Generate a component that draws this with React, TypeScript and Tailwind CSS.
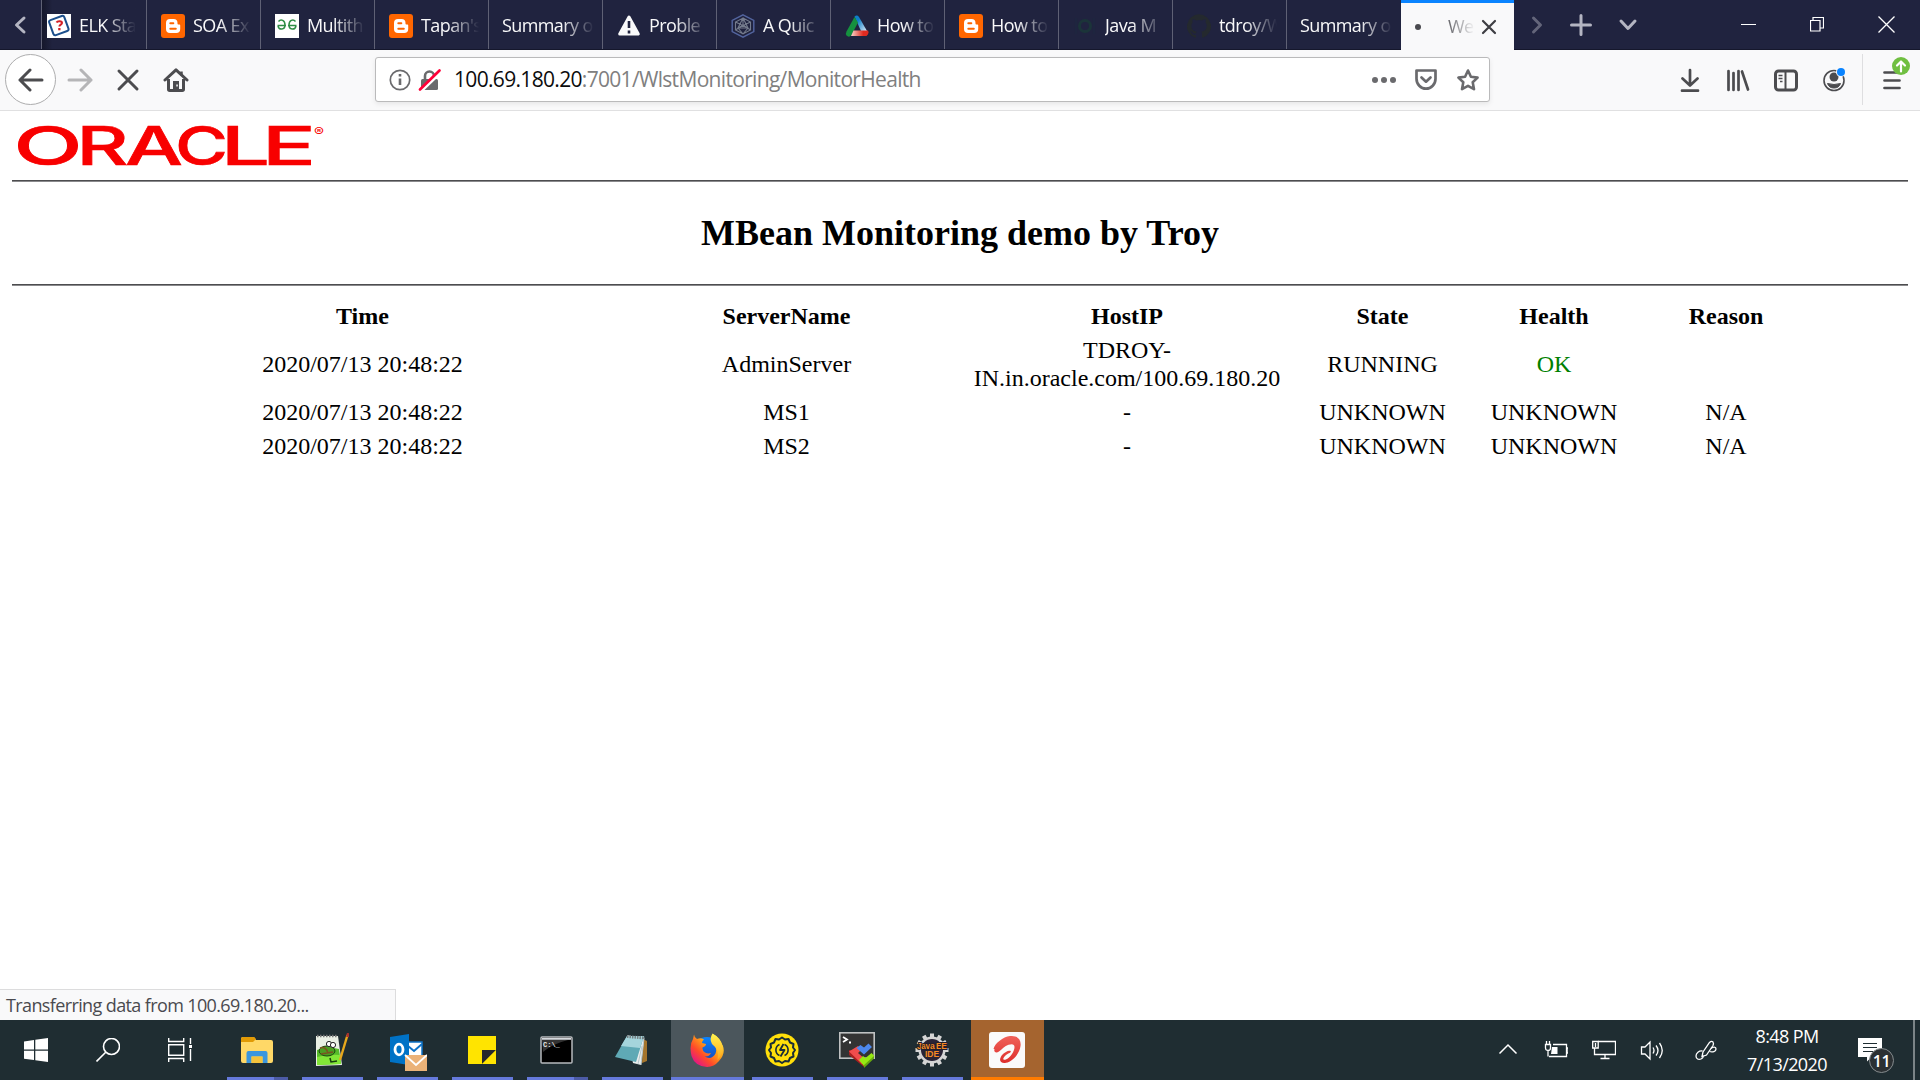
import React from "react";

type IconProps = { children: React.ReactNode; w?: number; h?: number; className?: string };

function Draw({ children, w = 24, h = 24, className = "" }: IconProps) {
  return (
    <svg width={w} height={h} viewBox={`0 0 ${w} ${h}`} fill="none" className={`block shrink-0 ${className}`}>
      {children}
    </svg>
  );
}

/* ---------- favicons ---------- */

const Blogger = () => (
  <Draw>
    <rect width="24" height="24" rx="3" fill="#ff6600" />
    <path d="M9 5h3.5A4 4 0 0 1 16.500 9v.6c0 .6.4 1 1 1h.7c.6 0 1 .4 1 1V15a4 4 0 0 1-4 4H9a4 4 0 0 1-4-4V9a4 4 0 0 1 4-4z" fill="#fff" />
    <path d="M9.300 9.300h3M9.300 14.700h5.500" stroke="#ff6600" strokeWidth="2" strokeLinecap="round" />
  </Draw>
);

const ElkFavicon = () => (
  <Draw>
    <rect width="24" height="24" fill="#fff" />
    <rect x="4" y="3.500" width="16" height="16" rx="2" transform="rotate(-20 12 12)" fill="#fff" stroke="#1c4f8c" strokeWidth="2" />
    <path d="M9.500 8.500c1-1.800 5.500-1.600 5.500.5 0 1.600-2.600 1.600-2.600 3.500" stroke="#d42027" strokeWidth="2" />
    <rect x="11.200" y="14" width="2.300" height="2.300" fill="#d42027" />
  </Draw>
);

const GeeksFavicon = () => (
  <Draw>
    <rect width="24" height="24" fill="#fff" />
    <path d="M2.500 11.500h8.500M3.500 7.500C6 4.500 10 6.500 10 11c0 5-6 5.500-7 1M21.500 11.500H13M20.500 7.500C18 4.500 14 6.500 14 11c0 5 6 5.500 7 1" stroke="#2f8d46" strokeWidth="1.500" />
  </Draw>
);

const WarnFavicon = () => (
  <Draw>
    <path d="M12 3 21.300 20H2.700z" fill="#f9f9fa" stroke="#f9f9fa" strokeWidth="3" strokeLinejoin="round" />
    <path d="M12 7v7M12 16.500v3" stroke="#20233f" strokeWidth="2.600" />
  </Draw>
);

const HexFavicon = () => (
  <Draw>
    <path d="M12 .8 22.800 6.500v11L12 23.200 1.200 17.500v-11z" stroke="#53659f" strokeWidth="1.400" />
    <path d="M12 4 19.500 8v8L12 20l-7.500-4V8zM12 4v7M4.500 8 17 14M19.500 8 7 14M7 14l5 6 5-6M12 4 7 14h10zM4.500 16 12 11l7.500 5" stroke="#747b8c" strokeWidth="1.100" />
  </Draw>
);

const TriFavicon = () => (
  <Draw>
    <defs>
      <linearGradient id="triB" x1="0" y1="0" x2="1" y2="1"><stop offset=".3" stopColor="#0f7ec8" /><stop offset="1" stopColor="#dcecf8" /></linearGradient>
      <linearGradient id="triR" x1="0" x2="1"><stop stopColor="#f8d5cc" /><stop offset=".7" stopColor="#e02a20" /></linearGradient>
    </defs>
    <path d="M9.500 2.500Q12 .500 14 3l8 14h-6z" fill="url(#triB)" />
    <path d="M9.500 3 13 8.500 6.500 21Q4 24 1.500 21.500.200 20 1.500 17.500z" fill="#15913f" />
    <path d="M8.500 16.500H23q1.500 3-1.500 5.500H6z" fill="url(#triR)" />
  </Draw>
);

const JavaFavicon = () => (
  <Draw>
    <path d="M3 4v16M21 4v16" stroke="#1e253f" strokeWidth="3" />
    <circle cx="12" cy="12" r="5.500" stroke="#1b3439" strokeWidth="3" />
  </Draw>
);

const GithubFavicon = () => (
  <Draw>
    <path fill="#24292e" d="M12 .300a12 12 0 0 0-3.800 23.400c.600.100.800-.300.800-.600v-2.200c-3.300.700-4-1.400-4-1.400-.500-1.400-1.300-1.800-1.300-1.800-1.100-.700.100-.700.100-.700 1.200.100 1.800 1.200 1.800 1.200 1.100 1.800 2.800 1.300 3.500 1 .100-.800.400-1.300.800-1.600-2.700-.300-5.500-1.300-5.500-5.900 0-1.300.500-2.400 1.200-3.200 0-.300-.500-1.500.200-3.200 0 0 1-.300 3.300 1.200a11.500 11.500 0 0 1 6 0c2.300-1.500 3.300-1.200 3.300-1.200.700 1.700.200 2.900.100 3.200.800.800 1.200 1.900 1.200 3.200 0 4.600-2.800 5.600-5.500 5.900.400.400.800 1.100.800 2.200v3.300c0 .300.200.700.800.600A12 12 0 0 0 12 .300" />
  </Draw>
);

type Tab = { title: string; icon?: React.ReactNode };

const tabs: Tab[] = [
  { title: "SOA Ex", icon: <Blogger /> },
  { title: "Multith", icon: <GeeksFavicon /> },
  { title: "Tapan's", icon: <Blogger /> },
  { title: "Summary o" },
  { title: "Proble", icon: <WarnFavicon /> },
  { title: "A Quic", icon: <HexFavicon /> },
  { title: "How to", icon: <TriFavicon /> },
  { title: "How to", icon: <Blogger /> },
  { title: "Java M", icon: <JavaFavicon /> },
  { title: "tdroy/W", icon: <GithubFavicon /> },
  { title: "Summary o" },
];

const fade = "overflow-hidden whitespace-nowrap [mask-image:linear-gradient(to_left,transparent,black_32px)]";

function TabStrip() {
  return (
    <div className="flex h-[50px] border-b border-[#15172c] bg-[#20233f] text-[18px] tracking-[-0.6px] text-[#f9f9fa]">
      <div className="flex w-[41px] items-center justify-center pr-px">
        <Draw w={14} h={20}><path d="M11 3 3.500 10l7.500 7" stroke="#b4b5c2" strokeWidth="3" strokeLinecap="round" strokeLinejoin="round" /></Draw>
      </div>
      <div className="flex w-[106px] items-center border-x border-[#5f6175] bg-linear-to-r from-[#15172b] to-[#20233f] to-10% pt-[3px] pl-[5px]">
        <ElkFavicon />
        <span className={`${fade} ml-[8px] w-[57px] pb-px`}>ELK Sta</span>
      </div>
      {tabs.map((t, i) => (
        <div key={i} className={`flex w-[114px] shrink-0 items-center pt-[3px] pl-[14px] ${i < 10 ? "border-r border-[#5f6175]" : ""}`}>
          {t.icon}
          <span className={t.icon ? `${fade} ml-2 w-[58px] pb-px` : `${fade} -ml-px w-[92px] pb-px`}>{t.title}</span>
        </div>
      ))}
      <div className="-mb-px flex w-[113px] shrink-0 items-center border-t-[3px] border-[#0a84ff] bg-[#f9f9fa] pl-[14px] text-[#4a4a4f]">
        <span className="mr-[27px] size-[6px] rounded-full bg-[#4a4a4f]" />
        <span className={`${fade} w-[27px]`}>We</span>
        <Draw w={16} h={16} className="ml-[6px]"><path d="m2 2 12 12M14 2 2 14" stroke="#3e3e43" strokeWidth="2.200" strokeLinecap="round" /></Draw>
      </div>
      <div className="flex w-[46px] items-center justify-center">
        <Draw w={12} h={20}><path d="m2.500 3 7 7-7 7" stroke="#63657a" strokeWidth="3" strokeLinecap="round" strokeLinejoin="round" /></Draw>
      </div>
      <div className="flex w-[42px] items-center justify-center">
        <Draw><path d="M12 2.500v19M2.500 12h19" stroke="#b4b5c2" strokeWidth="3" strokeLinecap="round" /></Draw>
      </div>
      <div className="flex w-[52px] items-center justify-center">
        <Draw w={20} h={16}><path d="m3 4 7 7.500L17 4" stroke="#b4b5c2" strokeWidth="3" strokeLinecap="round" strokeLinejoin="round" /></Draw>
      </div>
      <div className="ml-auto flex">
        <div className="flex w-[69px] items-center justify-center pr-[3px]"><Draw w={16}><path d="M1 11.500h15" stroke="#fff" /></Draw></div>
        <div className="flex w-[69px] items-center justify-center pr-[3px]"><Draw w={14} h={15}><path d="M.500 3.500h9.500v10.500H.500zM3 3.500v-3h10.500v10.500H10" stroke="#fff" strokeWidth="1.200" /></Draw></div>
        <div className="flex w-[67px] items-center justify-center"><Draw w={17} h={17}><path d="m.500.500 16 16M16.500.500l-16 16" stroke="#fff" strokeWidth="1.300" /></Draw></div>
      </div>
    </div>
  );
}

function Toolbar() {
  return (
    <div className="flex h-[61px] items-center border-b border-[#e0e0e1] bg-[#f9f9fa] pb-px">
      <div className="ml-[5px] flex size-[51px] items-center justify-center rounded-full border border-[#adadae] bg-white">
        <Draw w={26}><path d="M2 12h22M12 2 2 12l10 10" stroke="#4c4c4f" strokeWidth="3" strokeLinecap="round" strokeLinejoin="round" /></Draw>
      </div>
      <Draw w={26} className="ml-[11px]"><path d="M2 12h22M14 2l10 10-10 10" stroke="#b5b5b7" strokeWidth="3" strokeLinecap="round" strokeLinejoin="round" /></Draw>
      <Draw className="ml-[23px]"><path d="m3 3 18 18M21 3 3 21" stroke="#4c4c4f" strokeWidth="3" strokeLinecap="round" /></Draw>
      <Draw w={26} className="ml-[23px]">
        <path d="M2 12 13 1.800 24 12" stroke="#4c4c4f" strokeWidth="3" strokeLinecap="round" strokeLinejoin="round" />
        <path d="M18.500 3.500v4" stroke="#4c4c4f" strokeWidth="2.500" />
        <path d="M5.500 11v10.300q0 1.200 1.200 1.200h12.600q1.200 0 1.200-1.200V11" stroke="#4c4c4f" strokeWidth="3" />
        <path d="M10 22v-9h6v9" fill="#4c4c4f" />
        <rect x="13.300" y="16.500" width="1.500" height="2" fill="#f9f9fa" />
      </Draw>
      <div className="ml-[186px] flex h-[45px] w-[1115px] items-center rounded-[3px] border border-[#bababb] bg-white px-[13px] shadow-[0_2px_5px_rgba(0,0,0,0.08)]">
        <Draw w={22}>
          <circle cx="11" cy="12" r="9.700" stroke="#6a6a6d" strokeWidth="1.700" />
          <path d="M11 10.500V17M11 6v2.600" stroke="#6a6a6d" strokeWidth="2.600" />
        </Draw>
        <Draw className="ml-[7px]">
          <path d="M7 12V8a4.500 4.500 0 0 1 9 0v4" stroke="#6a6a6d" strokeWidth="2.600" />
          <rect x="3" y="11" width="17" height="11" rx="1.500" fill="#6a6a6d" />
          <path d="M1.500 24 23.500 3" stroke="#fff" strokeWidth="4" />
          <path d="M2 21.500 21.500 2.500" stroke="#ff0039" strokeWidth="2.700" strokeLinecap="round" />
        </Draw>
        <span className="ml-[12px] pt-px text-[21px] tracking-[-0.68px] whitespace-nowrap text-[#808080]"><span className="text-[#0c0c0d]">100.69.180.20</span>:7001/WlstMonitoring/MonitorHealth</span>
        <Draw w={26} className="ml-auto"><circle cx="4" cy="12" r="3" fill="#6a6a6d" /><circle cx="13" cy="12" r="3" fill="#6a6a6d" /><circle cx="22" cy="12" r="3" fill="#6a6a6d" /></Draw>
        <Draw className="ml-[17px]">
          <path d="M2.500 2.500h19v8.200a9.500 10 0 0 1-19 0z" stroke="#6a6a6d" strokeWidth="2.700" strokeLinejoin="round" />
          <path d="m7.500 9.500 4.500 4.200 4.500-4.200" stroke="#6a6a6d" strokeWidth="2.700" strokeLinecap="round" strokeLinejoin="round" />
        </Draw>
        <Draw className="-mr-[4px] ml-[18px]"><path d="m12 2.500 2.900 6.200 6.700.900-4.900 4.700 1.300 6.900-6-3.400-6 3.400 1.300-6.900-4.900-4.700 6.700-.900z" stroke="#6a6a6d" strokeWidth="2.600" strokeLinejoin="round" /></Draw>
      </div>
      <div className="ml-auto flex items-center">
        <Draw><path d="M12 2v15M4.500 10.500 12 17.500l7.500-7M4 22.700h16" stroke="#4c4c4f" strokeWidth="2.700" strokeLinecap="round" strokeLinejoin="round" /></Draw>
        <Draw className="ml-6"><path d="M2.500 3v19M7.500 5v17M12.500 3v19M16 3.500 22 21.500" stroke="#4c4c4f" strokeWidth="2.700" strokeLinecap="round" /></Draw>
        <Draw className="ml-6">
          <rect x="1.500" y="3" width="21" height="19" rx="3" stroke="#4c4c4f" strokeWidth="3" />
          <path d="M11.500 3v19" stroke="#4c4c4f" strokeWidth="2" />
          <path d="M4.500 7.500h4M4.500 10.500h4M6 13.500h2.500" stroke="#4c4c4f" strokeWidth="1.300" />
        </Draw>
        <div className="relative ml-6">
          <Draw>
            <circle cx="12" cy="12.500" r="10" stroke="#4c4c4f" strokeWidth="1.600" />
            <circle cx="12" cy="9" r="4.500" fill="#4c4c4f" />
            <path d="M5.500 15.500q6.500 2 13 0-1.500 4.500-6.500 4.500t-6.500-4.500z" fill="#4c4c4f" stroke="#4c4c4f" strokeLinejoin="round" />
          </Draw>
          <span className="absolute top-0 left-[15px] size-[8px] rounded-full bg-[#0a84ff] ring-1 ring-[#f9f9fa]" />
        </div>
        <div className="ml-4 h-[51px] w-px bg-[#dedee0]" />
        <div className="relative mr-4 ml-[17px]">
          <Draw><path d="M4.500 4.500h15M4.500 12.500h15M4.500 20h15" stroke="#4c4c4f" strokeWidth="2.700" strokeLinecap="round" /></Draw>
          <span className="absolute -top-[11px] left-[12px] flex size-[18px] items-center justify-center rounded-full bg-[#70bf41]">
            <Draw w={14} h={14}><path d="M7 2.500v10M3 6.500l4-4 4 4" stroke="#fff" strokeWidth="2.200" strokeLinecap="round" strokeLinejoin="round" /></Draw>
          </span>
        </div>
      </div>
    </div>
  );
}

/* ---------- page ---------- */

const wordmark = [
  { c: "O", x: 1.500, w: 69 },
  { c: "R", x: 64.500, w: 52 },
  { c: "A", x: 113, w: 58 },
  { c: "C", x: 163, w: 53 },
  { c: "L", x: 209, w: 49 },
  { c: "E", x: 250, w: 54 },
];

function OracleLogo() {
  return (
    <svg width="320" height="56" viewBox="0 0 320 56" className="block" aria-label="Oracle">
      <g fill="#f80000" fontFamily="Inter, 'Liberation Sans', sans-serif">
        <text y="47" fontSize="53" fontWeight="500" stroke="#f80000" strokeWidth=".6">
          {wordmark.map((l) => (
            <tspan key={l.c} x={l.x} textLength={l.w} lengthAdjust="spacingAndGlyphs">{l.c}</tspan>
          ))}
        </text>
        <text x="302" y="18" fontSize="12" textLength="10" lengthAdjust="spacingAndGlyphs">®</text>
      </g>
    </svg>
  );
}

const rows = [
  ["2020/07/13 20:48:22", "AdminServer", "TDROY-\nIN.in.oracle.com/100.69.180.20", "RUNNING", "OK", ""],
  ["2020/07/13 20:48:22", "MS1", "-", "UNKNOWN", "UNKNOWN", "N/A"],
  ["2020/07/13 20:48:22", "MS2", "-", "UNKNOWN", "UNKNOWN", "N/A"],
];

const rowGrid = "grid grid-cols-[525px_323px_358px_153px_190px_154px] items-center pl-[88px] text-center";

function Rule() {
  return <div className="h-[2px] border-t border-[#4d4d4f] bg-[#8a8a8c]" />;
}

function Page() {
  return (
    <main className="flex-1 bg-white px-3 font-['Liberation_Serif',serif] text-[24px] leading-[28px] text-black">
      <div className="h-[69px] pt-[7px]"><OracleLogo /></div>
      <Rule />
      <h1 className="flex h-[102px] items-center justify-center text-[36px] leading-[42px] font-bold">MBean Monitoring demo by Troy</h1>
      <Rule />
      <div className="pt-[14px]">
        <div className={`${rowGrid} mb-[2px] h-[31px] font-bold`}>
          {["Time", "ServerName", "HostIP", "State", "Health", "Reason"].map((h) => <div key={h}>{h}</div>)}
        </div>
        {rows.map((r, i) => (
          <div key={i} className={`${rowGrid} ${i === 0 ? "h-[62px]" : "h-[34px]"}`}>
            {r.map((c, j) => <div key={j} className={c === "OK" ? "text-[#008000]" : "whitespace-pre-line"}>{c}</div>)}
          </div>
        ))}
      </div>
    </main>
  );
}

/* ---------- taskbar ---------- */

const Explorer = () => (
  <Draw w={32} h={28}>
    <path d="M0 3q0-2 2-2h11l2 3h15q2 0 2 2v19q0 2-2 2H2q-2 0-2-2z" fill="#ffd867" />
    <path d="M0 3q0-2 2-2h11l2 2-3 3H0z" fill="#e19a05" />
    <path d="M5.500 27V17q0-2 2-2h17q2 0 2 2v10h-5v-6.500h-11V27z" fill="#3b96dd" />
    <path d="M10.500 20.500h11V27h-11z" fill="#f5c33b" />
  </Draw>
);

const NotepadPP = () => (
  <Draw w={34} h={34}>
    <path d="M1 3h22l4 29-26 1z" fill="#e9efe5" />
    <path d="M2 17q10-4 22-1l2 15L2 32z" fill="#55bb29" />
    <path d="M2 24q12-3 23-2l1 9-24 1z" fill="#82e637" />
    <path d="M2 3h21" stroke="#777" strokeWidth="2.500" strokeDasharray="1.500 1.500" />
    <ellipse cx="12" cy="18" rx="8" ry="5" fill="#4b9d22" stroke="#1c4410" />
    <path d="M5 15q6-2 8 5m-7 1 12-2" stroke="#7a5420" strokeWidth="1.500" />
    <circle cx="14" cy="11" r="2.600" fill="#fff" stroke="#222" />
    <circle cx="18" cy="12" r="2.600" fill="#fff" stroke="#222" />
    <path d="m15 25 1 4 6-1" stroke="#173f10" strokeWidth="1.500" />
    <path d="M32.500 2 25 27" stroke="#e7a81c" strokeWidth="2.400" />
    <path d="m33.500 0-1 4" stroke="#a8322c" strokeWidth="3" />
  </Draw>
);

const Outlook = () => (
  <Draw w={37} h={38}>
    <path d="M16 9h16v14H16z" fill="#fff" />
    <path d="M18 9h14v14H18" stroke="#0e73c8" strokeWidth="1.500" />
    <path d="m18 13 6 5 8-7" stroke="#0e73c8" strokeWidth="2" />
    <path d="M0 4 19 1v31L0 29z" fill="#0072c6" />
    <ellipse cx="9" cy="16.500" rx="4" ry="5.300" stroke="#fff" strokeWidth="2.800" />
    <path d="M15 22h22v16H15z" fill="#ebb278" />
    <path d="m15 22 11 10 11-10" stroke="#fff" strokeWidth="1.800" />
  </Draw>
);

const Sticky = () => (
  <Draw w={28} h={28}>
    <path d="M0 0h28v14L14 28H0z" fill="#ffe400" />
    <path d="M14 14h14L14 28z" fill="#27282b" />
    <path d="M28 14v14H14z" fill="#ffe400" />
  </Draw>
);

const Cmd = () => (
  <Draw w={33} h={28}>
    <rect x="1" y="1" width="31" height="26" rx="1" fill="#000" stroke="#b6b9bd" strokeWidth="1.500" />
    <path d="M2 3.800V2h29v1.800z" fill="#d5d8dd" />
    <path d="M2 4h26Q12 8 3 16z" fill="#333" />
    <text x="3" y="11" fontSize="7" fontWeight="700" fill="#e6e6e6" fontFamily="Liberation Mono, monospace">C:\_</text>
  </Draw>
);

const Notepad = () => (
  <Draw w={33} h={32}>
    <path d="m28 5 4 2v20l-5 2z" fill="#a5752c" />
    <path d="M12 1 29 5 26 31 18 29z" fill="#e9eeee" />
    <path d="M12 2h17l-8 26L0 23z" fill="#5fa9b5" />
    <path d="M12 2h17l-4 12-19-2z" fill="#a5d5dc" />
    <path d="M29 4 26 31M27 12l-4 18" stroke="#b7c6c9" />
    <path d="M12 2.500 30 4" stroke="#737d80" strokeWidth="3" strokeDasharray="1.500 1" />
  </Draw>
);

const Firefox = () => (
  <Draw w={34} h={34}>
    <defs>
      <linearGradient id="fxA" x1=".9" y1=".1" x2=".15" y2=".9"><stop stopColor="#ffe13c" /><stop offset=".4" stopColor="#ffa018" /><stop offset=".7" stopColor="#ff4a2a" /><stop offset="1" stopColor="#e31587" /></linearGradient>
      <linearGradient id="fxB" x1="0" y1="0" x2="0" y2="1"><stop stopColor="#0a84ff" /><stop offset="1" stopColor="#1b3fae" /></linearGradient>
      <linearGradient id="fxC" x1="0" y1="0" x2="0" y2="1"><stop stopColor="#fff44f" /><stop offset="1" stopColor="#ffa51e" /></linearGradient>
    </defs>
    <circle cx="17" cy="18" r="14" fill="url(#fxB)" />
    <path d="M4 1.500Q4.500 5 7 6q4-1.500 7 .5-2 1-2 3.500l4 1q0 2-3.500 3.500-.5 3 2.500 5 3 1.500 6 .500-2 4-6.500 3.500 7 4 11-3 2-5-1.500-10Q21 7 22.500 1q5 2 7.500 7 8 10-1 20-5 6-12 5.900Q5 33.500 1.500 23-1 12 3 6z" fill="url(#fxA)" />
    <path d="M22.500.500Q31 5 32.500 13 34 20 27.500 27 30 17 22 11q-3-5 .5-10.500z" fill="url(#fxC)" />
  </Draw>
);

const GoodSync = () => (
  <Draw w={34} h={34}>
    <circle cx="17" cy="17" r="16.500" fill="#ffdf0a" />
    <path d="m17 4.500 3 2 3.500-.5 1.500 3.500 3.500 1.500-.5 3.500 2 2.500-2 3 .5 3.500-3.500 1.500-1.500 3.500-3.500-.500-3 2-3-2-3.500.500L9 25l-3.500-1.500.500-3.500-2-3 2-2.500L5.500 11 9 9.500 10.500 6l3.500.5z" stroke="#1a2d38" strokeWidth="2" strokeLinejoin="round" />
    <path d="M14.500 11.500a6 6 0 0 0 0 11M19.500 22.500a6 6 0 0 0 0-11" stroke="#1a2d38" strokeWidth="1.600" />
    <path d="m18.500 11-3.500 6h4.500l-4 6.500" stroke="#1a2d38" strokeWidth="1.800" strokeLinejoin="round" />
  </Draw>
);

const Terminal = () => (
  <Draw w={36} h={36}>
    <rect x=".800" y=".800" width="34.400" height="25.400" fill="#333" stroke="#bfc1c2" strokeWidth="1.600" />
    <path d="m4 5 4 2.500L4 10" stroke="#fff" strokeWidth="1.800" />
    <path d="M10 10.500h2" stroke="#fff" strokeWidth="2" />
    <path d="m10 18 3 0 12 11v6L10 23z" fill="#a51f1f" />
    <path d="M10 19.500 19 14l3.500 3.500-3.500 3.500 8 7-4 4z" fill="#f04c4c" />
    <path d="m17.500 16 4-3 3.500 2.500 4.500-4 3.500 3.500-8 7.500z" fill="#4d88ee" />
    <path d="m20 28 4-4 2.500 2 6-5 3 3L25 34z" fill="#96e812" />
    <path d="m25 33 10-9v2.500L25 36z" fill="#67a80d" />
  </Draw>
);

const JavaIde = () => (
  <Draw w={38} h={36}>
    <path d="M19 1.500v33M2.500 18h33M10.750 3.700l16.500 28.600M27.250 3.700l-16.500 28.600M4.700 9.750l28.600 16.500M33.300 9.750 4.700 26.250" stroke="#d5d5d5" strokeWidth="4" />
    <circle cx="19" cy="18" r="13.500" fill="#d5d5d5" />
    <circle cx="19" cy="18" r="11" fill="#282335" />
    <text x="19" y="17" textAnchor="middle" fontSize="8.500" fontWeight="700" fill="#f58a22" stroke="#241e2c" strokeWidth="1.800" paintOrder="stroke" textLength="30" fontFamily="Liberation Sans, sans-serif">Java EE</text>
    <text x="19" y="25" textAnchor="middle" fontSize="8.500" fontWeight="700" fill="#f58a22" fontFamily="Liberation Sans, sans-serif">IDE</text>
  </Draw>
);

const Airtel = () => (
  <Draw w={36} h={36}>
    <defs>
      <linearGradient id="airA" x1="0" y1="0" x2="0" y2="1"><stop stopColor="#f0625a" /><stop offset="1" stopColor="#de2f2c" /></linearGradient>
    </defs>
    <rect width="36" height="36" rx="3" fill="#fafafa" />
    <path d="M4.500 17C6 11 14 5 21 4c7-.8 11.500 3 10.500 10-1 8-8 15.500-14.500 16.800-4.500.8-7-1.300-5.500-5 1.300-3.300 5-6.300 8.500-7 2-.4 2.500 1 1 2-3 1.200-5.500 3-6.500 5.200-.7 1.700.5 2.200 2.300 1.500 4.500-1.800 8.700-8 8.700-12.500 0-3-2.500-3.500-6-2.200-4 1.500-6.500 4.500-9.500 6.700-3 2-5.500.5-4.500-2.500z" fill="url(#airA)" />
  </Draw>
);

const apps = [
  { icon: <Explorer />, stacked: true },
  { icon: <NotepadPP /> },
  { icon: <div className="mt-[3px] ml-[4px]"><Outlook /></div> },
  { icon: <Sticky /> },
  { icon: <Cmd />, stacked: true },
  { icon: <Notepad /> },
  { icon: <Firefox />, state: "active" },
  { icon: <GoodSync /> },
  { icon: <Terminal /> },
  { icon: <JavaIde /> },
  { icon: <Airtel />, state: "alert" },
] as { icon: React.ReactNode; stacked?: boolean; state?: string }[];

function AppButton({ icon, stacked, state }: (typeof apps)[number]) {
  const cell = state === "active" ? "bg-[#4b565c]" : state === "alert" ? "bg-[#a5642f]" : "";
  const bar = state === "active" ? "w-full bg-[#6579db]" : state === "alert" ? "w-full bg-[#ff7b00]" : "w-[61px] bg-[#6579db]";
  return (
    <div className={`mx-px flex h-[60px] w-[73px] flex-col items-center ${cell}`}>
      <div className="flex h-[57px] items-center pt-[3px] pr-[2px]">{icon}</div>
      <div className={`flex h-[3px] justify-end ${bar}`}>{stacked && <span className="w-[14px] bg-[#4c5ba6]" />}</div>
    </div>
  );
}

function Taskbar() {
  return (
    <footer className="flex h-[60px] items-center bg-[#1f2d32] text-white">
      <div className="flex w-[72px] justify-center">
        <Draw><path d="M0 3.500 10 2v9.500H0zM11.300 1.800 24 0v11.500H11.300zM0 12.700h10v9.400L0 20.700zM11.300 12.700H24V24l-12.700-1.800z" fill="#fff" /></Draw>
      </div>
      <div className="flex w-[72px] justify-center">
        <Draw><circle cx="15.500" cy="8.500" r="8" stroke="#fff" strokeWidth="1.600" /><path d="M9.700 14.300.500 23.500" stroke="#fff" strokeWidth="1.600" /></Draw>
      </div>
      <div className="flex w-[76px] justify-center pr-1">
        <Draw><path d="M.700 0v3.500h15V0M.700 6.700h15v10.500h-15zM.700 24v-3.500h15V24M22.500 0v6M22.500 11v12" stroke="#fff" strokeWidth="1.400" /><rect x="21" y="7" width="3" height="3" fill="#fff" /></Draw>
      </div>
      {apps.map((a, i) => <AppButton key={i} {...a} />)}
      <div className="ml-auto flex items-center">
        <div className="flex w-12 justify-center"><Draw w={20}><path d="m1.500 15.500 8.500-8.500 8.500 8.500" stroke="#fff" strokeWidth="1.500" /></Draw></div>
        <div className="flex w-12 justify-center">
          <Draw>
            <path d="M9 6.500h13.500v12H5M22.500 10H24v5h-1.500" stroke="#fff" strokeWidth="1.300" />
            <path d="M8 9h5.500v7H7z" fill="#fff" />
            <path d="M1.500 6.500h5v3.500q0 2.500-2.500 2.500T1.500 10zM2.500 3v3M5.500 3v3M4 13v5.500" fill="#1f2d32" stroke="#fff" strokeWidth="1.300" />
          </Draw>
        </div>
        <div className="flex w-12 justify-center">
          <Draw><path d="M6 3.500h17.500v13H2.500V10M13 17v4M8.500 20.500h9" stroke="#fff" strokeWidth="1.300" /><path d="M.700 3.500h5.500v6.500H.700zM3.500 5v4" stroke="#fff" strokeWidth="1.300" /></Draw>
        </div>
        <div className="flex w-12 justify-center">
          <Draw><path d="M1.500 9H5l5-5v17l-5-5H1.500zM13 9.500q2 3 0 6M16 7.500q4 5 0 10M19.500 5q5.500 7.500 0 15" stroke="#fff" strokeWidth="1.300" /></Draw>
        </div>
        <div className="flex w-[60px] justify-center">
          <Draw>
            <path d="m8 18.500 1-4.500 6.500-9.500q2-2 3.500-.5 1 1.500 0 3.500L12.500 17z" stroke="#fff" strokeWidth="1.300" />
            <path d="M8.500 13C5 12.500 2 15 2 18s2.500 4 5 3 2.500-2.500 1.500-4M17 10.500c2-2 5-2 5 .5s-3.500 3.500-6.500 2.500" stroke="#fff" strokeWidth="1.300" />
          </Draw>
        </div>
        <div className="w-[102px] pb-px text-center text-[18px] leading-[28px] tracking-[-0.6px]"><div>8:48 PM</div><div>7/13/2020</div></div>
        <div className="relative w-[75px] pl-5">
          <Draw><path d="M0 0h24v19H13.500L9 23.500V19H0z" fill="#fff" /><path d="M5 5.500h14M5 9.500h14M5 13.500h10" stroke="#1f2d32" strokeWidth="1.200" /></Draw>
          <span className="absolute top-[10px] left-[31px] flex size-[25px] items-center justify-center rounded-full border border-[#858b8e] bg-[#2b3033] text-[16px] font-semibold tracking-tight">11</span>
        </div>
        <div className="h-[60px] w-[7px] border-l-2 border-[#7b8487]" />
      </div>
    </footer>
  );
}

export default function App() {
  return (
    <div className="flex h-[1080px] w-[1920px] flex-col overflow-hidden bg-white font-['Open_Sans','Noto_Sans',sans-serif]">
      <TabStrip />
      <Toolbar />
      <Page />
      <div className="flex h-[31px] w-[396px] items-center border-t border-r border-[#dcdcdd] bg-[#f9f9fa] pl-[6px] text-[18px] tracking-[-0.62px] whitespace-nowrap text-[#4a4a4f]">Transferring data from 100.69.180.20...</div>
      <Taskbar />
    </div>
  );
}
